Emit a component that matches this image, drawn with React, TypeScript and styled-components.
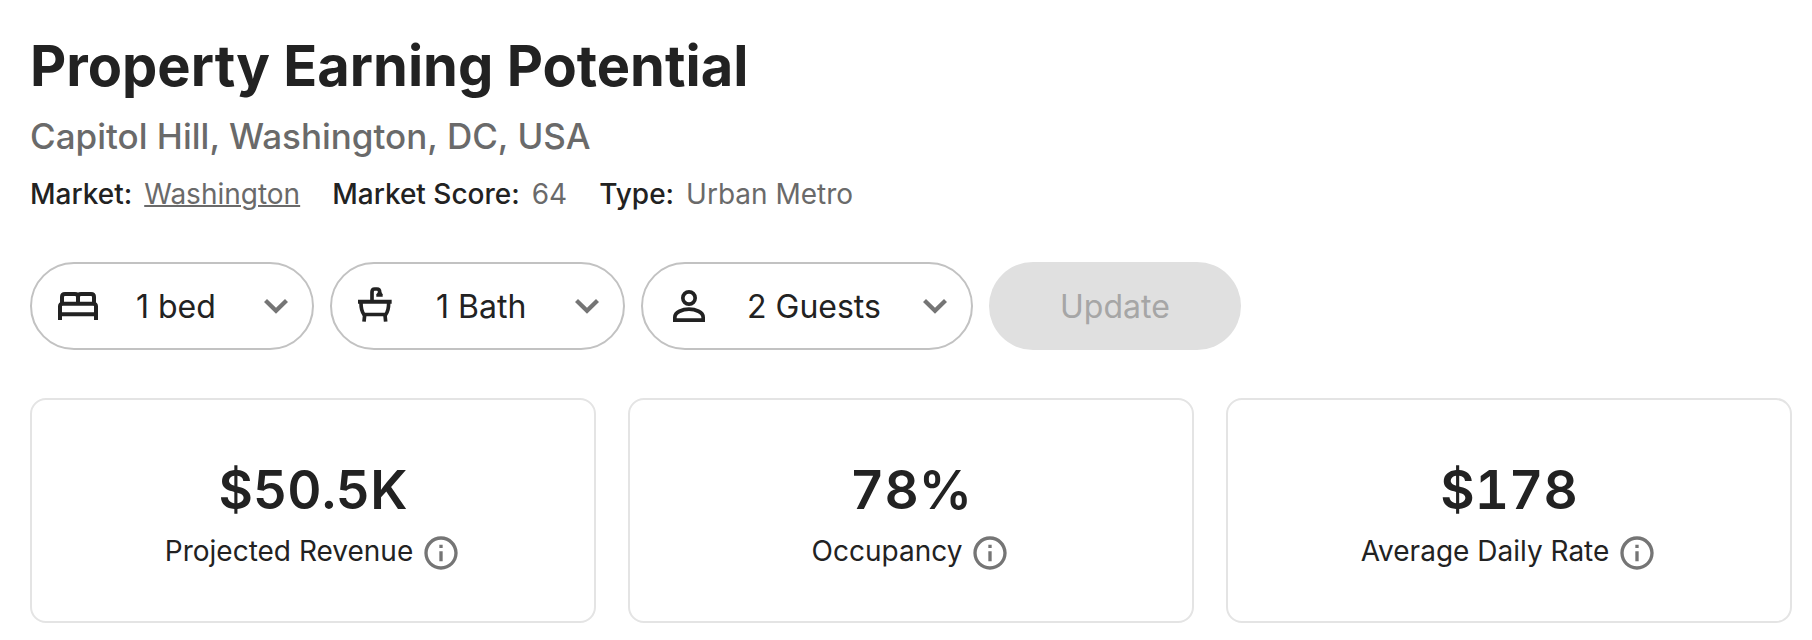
import React, { useState } from 'react';
import styled, { createGlobalStyle } from 'styled-components';

const GlobalStyle = createGlobalStyle`
  *, *::before, *::after {
    box-sizing: border-box;
  }

  body {
    margin: 0;
    background: #ffffff;
    color: #222222;
    font-family: Inter, "Liberation Sans", sans-serif;
  }
`;

const Page = styled.main`
  padding: 34px 20px 16px 30px;
`;

const Header = styled.header`
  display: flex;
  flex-direction: column;
  gap: 16px;
`;

const Title = styled.h1`
  margin: 0;
  font-size: 56px;
  font-weight: 700;
  line-height: 64px;
`;

const Location = styled.h2`
  margin: 0;
  color: #6a6a6a;
  font-size: 35px;
  font-weight: 500;
  line-height: 44px;
`;

const Facts = styled.dl`
  display: flex;
  flex-wrap: wrap;
  gap: 8px 32px;
  margin: 0;
  font-size: 28px;
  line-height: 40px;
`;

const Fact = styled.div`
  display: flex;
  gap: 12px;
`;

const FactName = styled.dt`
  font-weight: 500;
`;

const FactValue = styled.dd`
  margin: 0;
  color: #6a6a6a;
`;

const MarketLink = styled.a`
  color: inherit;
  text-decoration: underline;
  text-decoration-thickness: 2px;
`;

const Filters = styled.form`
  display: flex;
  flex-wrap: wrap;
  gap: 16px;
  margin: 48px 0;
`;

const Pill = styled.label<{ $width: number }>`
  display: grid;
  align-items: center;
  width: ${({ $width }) => $width}px;
  height: 88px;

  > * {
    grid-area: 1 / 1;
  }
`;

const PillIcon = styled.span`
  display: flex;
  justify-self: start;
  margin-left: 28px;
  color: #222222;
  pointer-events: none;
  z-index: 1;
`;

const PillArrow = styled(PillIcon)`
  justify-self: end;
  margin: 0 26px 0 0;
  color: #757575;
`;

const PillSelect = styled.select`
  appearance: none;
  width: 100%;
  height: 100%;
  padding: 2px 60px 0 104px;
  border: 2px solid #c2c2c2;
  border-radius: 44px;
  background: #ffffff;
  color: #222222;
  font: 400 32px/40px Inter, "Liberation Sans", sans-serif;
  cursor: pointer;
`;

const UpdateButton = styled.button`
  height: 88px;
  padding: 2px 71px 0;
  border: 0;
  border-radius: 44px;
  background: #e0e0e0;
  color: #a6a6a6;
  font: 400 32px/40px Inter, "Liberation Sans", sans-serif;
`;

const Cards = styled.section`
  display: grid;
  grid-template-columns: repeat(3, minmax(0, 1fr));
  gap: 32px;
`;

const Card = styled.article`
  display: flex;
  flex-direction: column;
  align-items: center;
  gap: 12px;
  padding: 59px 16px 48px;
  border: 2px solid #e4e4e4;
  border-radius: 16px;
`;

const CardValue = styled.strong`
  font-size: 53px;
  font-weight: 600;
  line-height: 62px;
  font-variant-numeric: tabular-nums;
`;

const CardLabel = styled.div`
  display: flex;
  align-items: flex-start;
  gap: 8px;
  font-size: 28px;
  line-height: 36px;
`;

const InfoButton = styled.button`
  display: flex;
  padding: 0;
  border: 0;
  background: none;
  color: #757575;
  cursor: pointer;
`;

const BedIcon = () => (
  <svg width="40" height="28" viewBox="24 36 120 84" fill="none" stroke="currentColor" strokeWidth="12" aria-hidden="true">
    <path d="M30 120V79Q30 71 38 71H130Q138 71 138 79V120M30 103H138" />
    <path d="M36 72V51Q36 42 45 42H75Q84 42 84 51V71M84 51Q84 42 93 42H123Q132 42 132 51V72" />
  </svg>
);

const BathIcon = () => (
  <svg width="35" height="38" viewBox="22 22 105 114" fill="none" stroke="currentColor" strokeWidth="11" aria-hidden="true">
    <path d="M22 66.500H123" strokeWidth="12" />
    <path d="M31 70C31 88 33 96 40 104.500H105C112 96 114 88 114 70" />
    <path d="M42 106L40 126M103 106L105 126" />
    <path d="M64 63V37Q64 28 72 28H79Q87 28 87 37V42" />
    <path d="M82 38H92L96 44V51H77V44Z" fill="currentColor" stroke="none" />
  </svg>
);

const PersonIcon = () => (
  <svg width="40" height="40" viewBox="117 109 120 120" fill="none" stroke="currentColor" strokeWidth="11" aria-hidden="true">
    <circle cx="177" cy="145" r="18.500" />
    <path d="M134.500 211.500V203C134.500 187 158 178.500 177 178.500S219.500 187 219.500 203V211.500Z" />
  </svg>
);

const ChevronIcon = () => (
  <svg width="24" height="15" viewBox="0 0 24 15" fill="currentColor" aria-hidden="true">
    <path d="M3 0L12 8.800 21 0 24 3 12 14.800 0 3z" />
  </svg>
);

const InfoIcon = () => (
  <svg width="40" height="40" viewBox="0 0 24 24" fill="currentColor" aria-hidden="true">
    <path d="M11 7h2v2h-2zm0 4h2v6h-2zm1-9C6.480 2 2 6.480 2 12s4.480 10 10 10 10-4.480 10-10S17.520 2 12 2zm0 18c-4.410 0-8-3.590-8-8s3.590-8 8-8 8 3.590 8 8-3.590 8-8 8z" />
  </svg>
);

type FilterProps = {
  name: string;
  icon: React.ReactNode;
  options: string[];
  width: number;
};

function Filter({ name, icon, options, width }: FilterProps) {
  const [value, setValue] = useState(options[0]);
  return (
    <Pill $width={width}>
      <PillIcon>{icon}</PillIcon>
      <PillSelect aria-label={name} value={value} onChange={(e) => setValue(e.target.value)}>
        {options.map((option) => (
          <option key={option}>{option}</option>
        ))}
      </PillSelect>
      <PillArrow>
        <ChevronIcon />
      </PillArrow>
    </Pill>
  );
}

const metrics = [
  { value: '$50.5K', label: 'Projected Revenue' },
  { value: '78%', label: 'Occupancy' },
  { value: '$178', label: 'Average Daily Rate' },
];

export default function App() {
  return (
    <>
      <GlobalStyle />
      <Page>
        <Header>
          <Title>Property Earning Potential</Title>
          <Location>Capitol Hill, Washington, DC, USA</Location>
          <Facts>
            <Fact>
              <FactName>Market:</FactName>
              <FactValue>
                <MarketLink href="#washington">Washington</MarketLink>
              </FactValue>
            </Fact>
            <Fact>
              <FactName>Market Score:</FactName>
              <FactValue>64</FactValue>
            </Fact>
            <Fact>
              <FactName>Type:</FactName>
              <FactValue>Urban Metro</FactValue>
            </Fact>
          </Facts>
        </Header>

        <Filters onSubmit={(e) => e.preventDefault()}>
          <Filter name="Bedrooms" icon={<BedIcon />} options={['1 bed']} width={284} />
          <Filter name="Bathrooms" icon={<BathIcon />} options={['1 Bath']} width={295} />
          <Filter name="Guests" icon={<PersonIcon />} options={['2 Guests']} width={332} />
          <UpdateButton type="submit" disabled>
            Update
          </UpdateButton>
        </Filters>

        <Cards>
          {metrics.map(({ value, label }) => (
            <Card key={label}>
              <CardValue>{value}</CardValue>
              <CardLabel>
                {label}
                <InfoButton type="button" aria-label={`About ${label}`}>
                  <InfoIcon />
                </InfoButton>
              </CardLabel>
            </Card>
          ))}
        </Cards>
      </Page>
    </>
  );
}
